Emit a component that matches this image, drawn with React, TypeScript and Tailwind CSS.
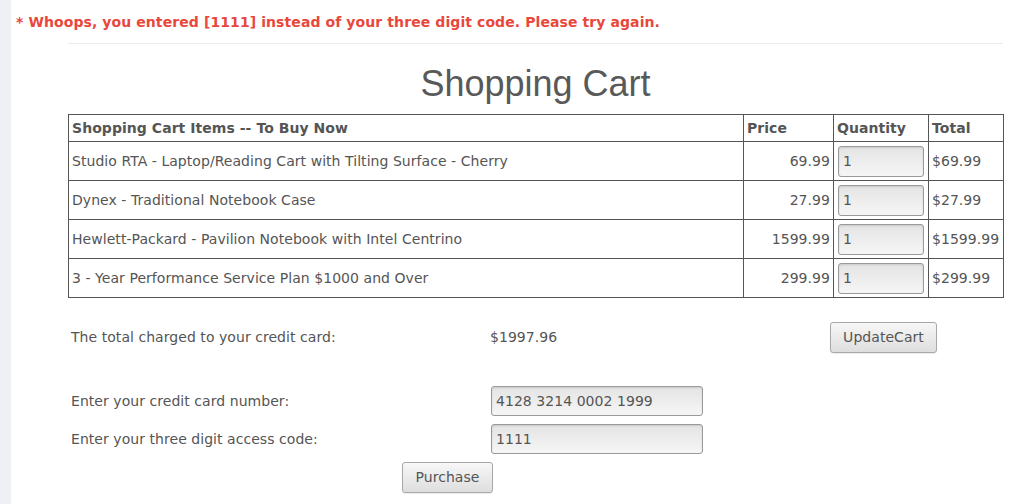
import React from "react";

const items = [
  { name: "Studio RTA - Laptop/Reading Cart with Tilting Surface - Cherry", price: "69.99", total: "$69.99" },
  { name: "Dynex - Traditional Notebook Case", price: "27.99", total: "$27.99" },
  { name: "Hewlett-Packard - Pavilion Notebook with Intel Centrino", price: "1599.99", total: "$1599.99" },
  { name: "3 - Year Performance Service Plan $1000 and Over", price: "299.99", total: "$299.99" },
];

const inputCls =
  "border border-[#9a9a9a] rounded-[3px] bg-gradient-to-b from-[#e4e4e4] to-[#f6f6f6] shadow-[inset_0_1px_2px_rgba(0,0,0,0.12)] text-[14px] text-[#555] px-[4px] outline-none font-['DejaVu_Sans',sans-serif]";
const btnCls =
  "border border-[#a8a8a8] rounded-[3px] bg-gradient-to-b from-[#f7f7f7] to-[#dedede] text-[14px] text-[#555] font-['DejaVu_Sans',sans-serif] shadow-[0_1px_1px_rgba(0,0,0,0.08)]";

export default function App() {
  return (
    <div className="flex min-h-[504px] bg-white font-['DejaVu_Sans',sans-serif] text-[14px] tracking-[0.05px] text-[#555]">
      <div className="w-[11px] shrink-0 bg-[#eef0f5]" />
      <div className="flex-1">
        <div className="pt-[13px] pl-[5px] leading-[18px] font-bold tracking-[0.09px] text-[#e8483b]">
          * Whoops, you entered [1111] instead of your three digit code. Please try again.
        </div>
        <div className="ml-[57px] w-[935px]">
          <div className="mt-[12px] h-px bg-[#ececec]" />
          <h1 className="mt-[20px] h-[40px] text-center font-['Liberation_Sans',Arial,sans-serif] text-[36px] leading-[40px] tracking-normal text-[#595959]">
            Shopping Cart
          </h1>
          <table className="mt-[10px] w-[935px] border-collapse border border-[#555] table-fixed">
            <colgroup>
              <col className="w-[675px]" />
              <col className="w-[90px]" />
              <col className="w-[95px]" />
              <col className="w-[75px]" />
            </colgroup>
            <thead>
              <tr className="h-[27px]">
                <th className="border border-[#555] px-[3px] text-left font-bold">Shopping Cart Items -- To Buy Now</th>
                <th className="border border-[#555] px-[3px] text-left font-bold">Price</th>
                <th className="border border-[#555] px-[3px] text-left font-bold">Quantity</th>
                <th className="border border-[#555] px-[3px] text-left font-bold">Total</th>
              </tr>
            </thead>
            <tbody>
              {items.map((it) => (
                <tr key={it.name} className="h-[39px]">
                  <td className="border border-[#555] px-[3px]">{it.name}</td>
                  <td className="border border-[#555] px-[3px] text-right">{it.price}</td>
                  <td className="border border-[#555] pl-[4px] pr-[4px]">
                    <input readOnly value="1" className={`${inputCls} w-[86px] h-[31px] block`} />
                  </td>
                  <td className="border border-[#555] px-[3px]">{it.total}</td>
                </tr>
              ))}
            </tbody>
          </table>

          <div className="mt-[24px] flex h-[31px] items-center">
            <div className="w-[419px] pl-[3px]">The total charged to your credit card:</div>
            <div className="w-[343px] pl-[3px]">$1997.96</div>
            <button className={`${btnCls} w-[107px] h-[31px]`}>UpdateCart</button>
          </div>

          <div className="mt-[33px] flex h-[30px] items-center">
            <div className="w-[423px] pl-[3px]">Enter your credit card number:</div>
            <input readOnly value="4128 3214 0002 1999" className={`${inputCls} w-[212px] h-[30px]`} />
          </div>
          <div className="mt-[8px] flex h-[30px] items-center">
            <div className="w-[423px] pl-[3px]">Enter your three digit access code:</div>
            <input readOnly value="1111" className={`${inputCls} w-[212px] h-[30px]`} />
          </div>
          <div className="mt-[8px] flex h-[31px] items-center pl-[334px]">
            <button className={`${btnCls} w-[91px] h-[31px]`}>Purchase</button>
          </div>
        </div>
      </div>
    </div>
  );
}
